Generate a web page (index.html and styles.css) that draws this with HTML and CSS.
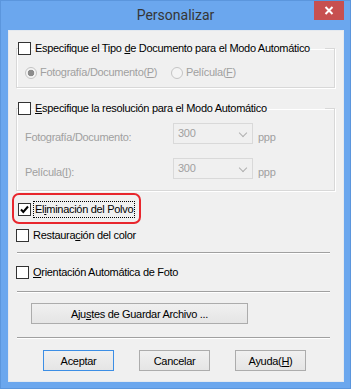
FILE: index.html
```html
<!DOCTYPE html>
<html lang="es">

<head>
  <meta charset="UTF-8">
  <title>Personalizar</title>
  <link rel="stylesheet" href="styles.css">
</head>

<body>
  <div class="window">
    <div class="titlebar">
      <span></span>
      <span class="title">Personalizar</span>
      <span class="close">
        <svg width="10" height="9" viewBox="0 0 10 9">
          <path d="M1.5 1 L8.5 8 M8.5 1 L1.5 8" stroke="#fff" stroke-width="2" fill="none" />
        </svg>
      </span>
    </div>

    <div class="client">
      <fieldset class="group group-type">
        <legend>
          <span class="check"><span class="box"></span><span>Especifique el Tipo <u>d</u>e Documento para el Modo Automático</span></span>
        </legend>
        <div class="radios">
          <span class="radio radio-first"><span class="dot on"></span><span>Fotografía/Documento(<u>P</u>)</span></span>
          <span class="radio"><span class="dot"></span><span>Película(<u>F</u>)</span></span>
        </div>
      </fieldset>

      <fieldset class="group group-res">
        <legend>
          <span class="check"><span class="box"></span><span><u>E</u>specifique la resolución para el Modo Automático</span></span>
        </legend>
        <div class="res-row">
          <span class="res-label">Foto<u>g</u>rafía/Documento:</span>
          <span class="combo"><span>300</span><span class="chev"></span></span>
          <span class="unit">ppp</span>
        </div>
        <div class="res-row res-row-second">
          <span class="res-label">Película(<u>I</u>):</span>
          <span class="combo"><span>300</span><span class="chev"></span></span>
          <span class="unit">ppp</span>
        </div>
      </fieldset>

      <div class="highlight">
        <span class="check">
          <span class="box checked">
            <svg width="11" height="11" viewBox="0 0 11 11">
              <path d="M2 5.5 L4.3 8 L9 2.5" stroke="#000" stroke-width="2" fill="none" />
            </svg>
          </span>
          <span class="focus">El<u>i</u>minación del Polvo</span>
        </span>
      </div>

      <div class="row row-restore">
        <span class="check"><span class="box"></span><span>Restaura<u>c</u>ión del color</span></span>
      </div>

      <div class="sep"></div>

      <div class="row row-orient">
        <span class="check"><span class="box"></span><span><u>O</u>rientación Automática de Foto</span></span>
      </div>

      <div class="sep sep-mid"></div>

      <div class="save-row">
        <span class="btn btn-wide"><span>Aju<u>s</u>tes de Guardar Archivo ...</span></span>
      </div>

      <div class="sep sep-low"></div>

      <div class="actions">
        <span class="btn btn-default">Aceptar</span>
        <span class="btn">Cancelar</span>
        <span class="btn"><span>Ayuda(<u>H</u>)</span></span>
      </div>
    </div>
  </div>
</body>

</html>
```

FILE: styles.css
```css
* {
  box-sizing: border-box;
}

html,
body {
  margin: 0;
}

body {
  width: 351px;
  height: 389px;
  overflow: hidden;
  background: #6ba7ee;
  font-family: "Liberation Sans", Arial, sans-serif;
  font-size: 11px;
  letter-spacing: -0.3px;
  color: #000;
}

u {
  text-decoration: underline;
  text-underline-offset: 1px;
}

.window {
  height: 389px;
  border: 1px solid #5b96dd;
  display: flex;
  flex-direction: column;
}

.titlebar {
  height: 29px;
  display: grid;
  grid-template-columns: 1fr auto 1fr;
  align-items: start;
}

.title {
  font-family: Roboto, "Liberation Sans", sans-serif;
  font-size: 14px;
  letter-spacing: 0;
  color: #363636;
  line-height: 18px;
  margin-top: 5px;
}

.close {
  justify-self: end;
  width: 30px;
  height: 19px;
  margin-right: 6px;
  background: #c75050;
  display: flex;
  align-items: center;
  justify-content: center;
}

.client {
  width: 336px;
  height: 352px;
  margin-left: 7px;
  border: 1px solid #e4e9ef;
  background: #f0f0f0;
  padding: 11px 0 0 7px;
}

/* group boxes */
.group {
  width: 319px;
  margin: 0;
  padding: 0 0 8px 1px;
  border: 1px solid #d8d8d8;
  box-shadow: inset 1px 1px #fff, 1px 1px #fff;
  min-inline-size: 0;
}

.group legend {
  padding: 0;
  width: 307px;
  height: 13px;
}

.group-res {
  margin-top: 14px;
  padding-bottom: 11px;
}

.check {
  display: flex;
  align-items: center;
  height: 13px;
  line-height: 13px;
  white-space: nowrap;
}

.box {
  width: 13px;
  height: 13px;
  flex: none;
  border: 1px solid #333;
  background: #fff;
  margin-right: 4px;
  display: flex;
  align-items: center;
  justify-content: center;
}

.radios {
  display: flex;
  margin-top: 11px;
  padding-left: 7px;
  color: #a0a0a0;
}

.radio {
  display: flex;
  align-items: center;
  height: 13px;
  line-height: 13px;
}

.radio-first {
  width: 146px;
}

.dot {
  width: 12px;
  height: 12px;
  border-radius: 50%;
  border: 1px solid #c4c4c4;
  background: #f4f4f4;
  margin-right: 3px;
}

.dot.on {
  background: radial-gradient(circle, #8c8c8c 0 3px, #f4f4f4 3.6px);
}

/* resolution rows */
.res-row {
  display: flex;
  align-items: flex-end;
  margin-top: 8px;
  padding-left: 7px;
  color: #a0a0a0;
}

.res-row-second {
  margin-top: 14px;
}

.res-label {
  width: 148px;
  line-height: 13px;
}

.combo {
  width: 80px;
  height: 21px;
  border: 1px solid #d9d9d9;
  background: #f0f0f0;
  padding: 3px 0 0 4px;
  line-height: 13px;
  display: flex;
  justify-content: space-between;
}

.chev {
  width: 6px;
  height: 6px;
  border-right: 1px solid #b0b0b0;
  border-bottom: 1px solid #b0b0b0;
  transform: rotate(45deg);
  margin: 3px 6px 0 0;
}

.unit {
  margin-left: 5px;
  line-height: 13px;
}

/* checkbox rows */
.highlight {
  width: 129px;
  margin: 2px 0 0 -4px;
  padding: 8px 0 6px 4px;
  border: 2px solid #e8262d;
  border-radius: 7px;
}

.focus {
  outline: 1px dotted #000;
  outline-offset: 1px;
}

.row-restore {
  margin-top: 5px;
}

.row-orient {
  margin-top: 12px;
}

.sep {
  width: 313px;
  margin: 10px 0 0 1px;
  border-top: 1px solid #a0a0a0;
  border-bottom: 1px solid #fff;
}

.sep-mid {
  margin-top: 12px;
}

.sep-low {
  margin-top: 13px;
}

/* buttons */
.save-row {
  margin-top: 10px;
  padding-left: 15px;
}

.btn {
  display: inline-flex;
  align-items: center;
  justify-content: center;
  width: 71px;
  height: 21px;
  border: 1px solid #acacac;
  background: linear-gradient(#f0f0f0, #e5e5e5);
}

.btn-wide {
  width: 217px;
}

.btn-default {
  border-color: #3c8ee5;
}

.actions {
  display: flex;
  gap: 25px;
  margin-top: 11px;
  padding-left: 27px;
}
```
